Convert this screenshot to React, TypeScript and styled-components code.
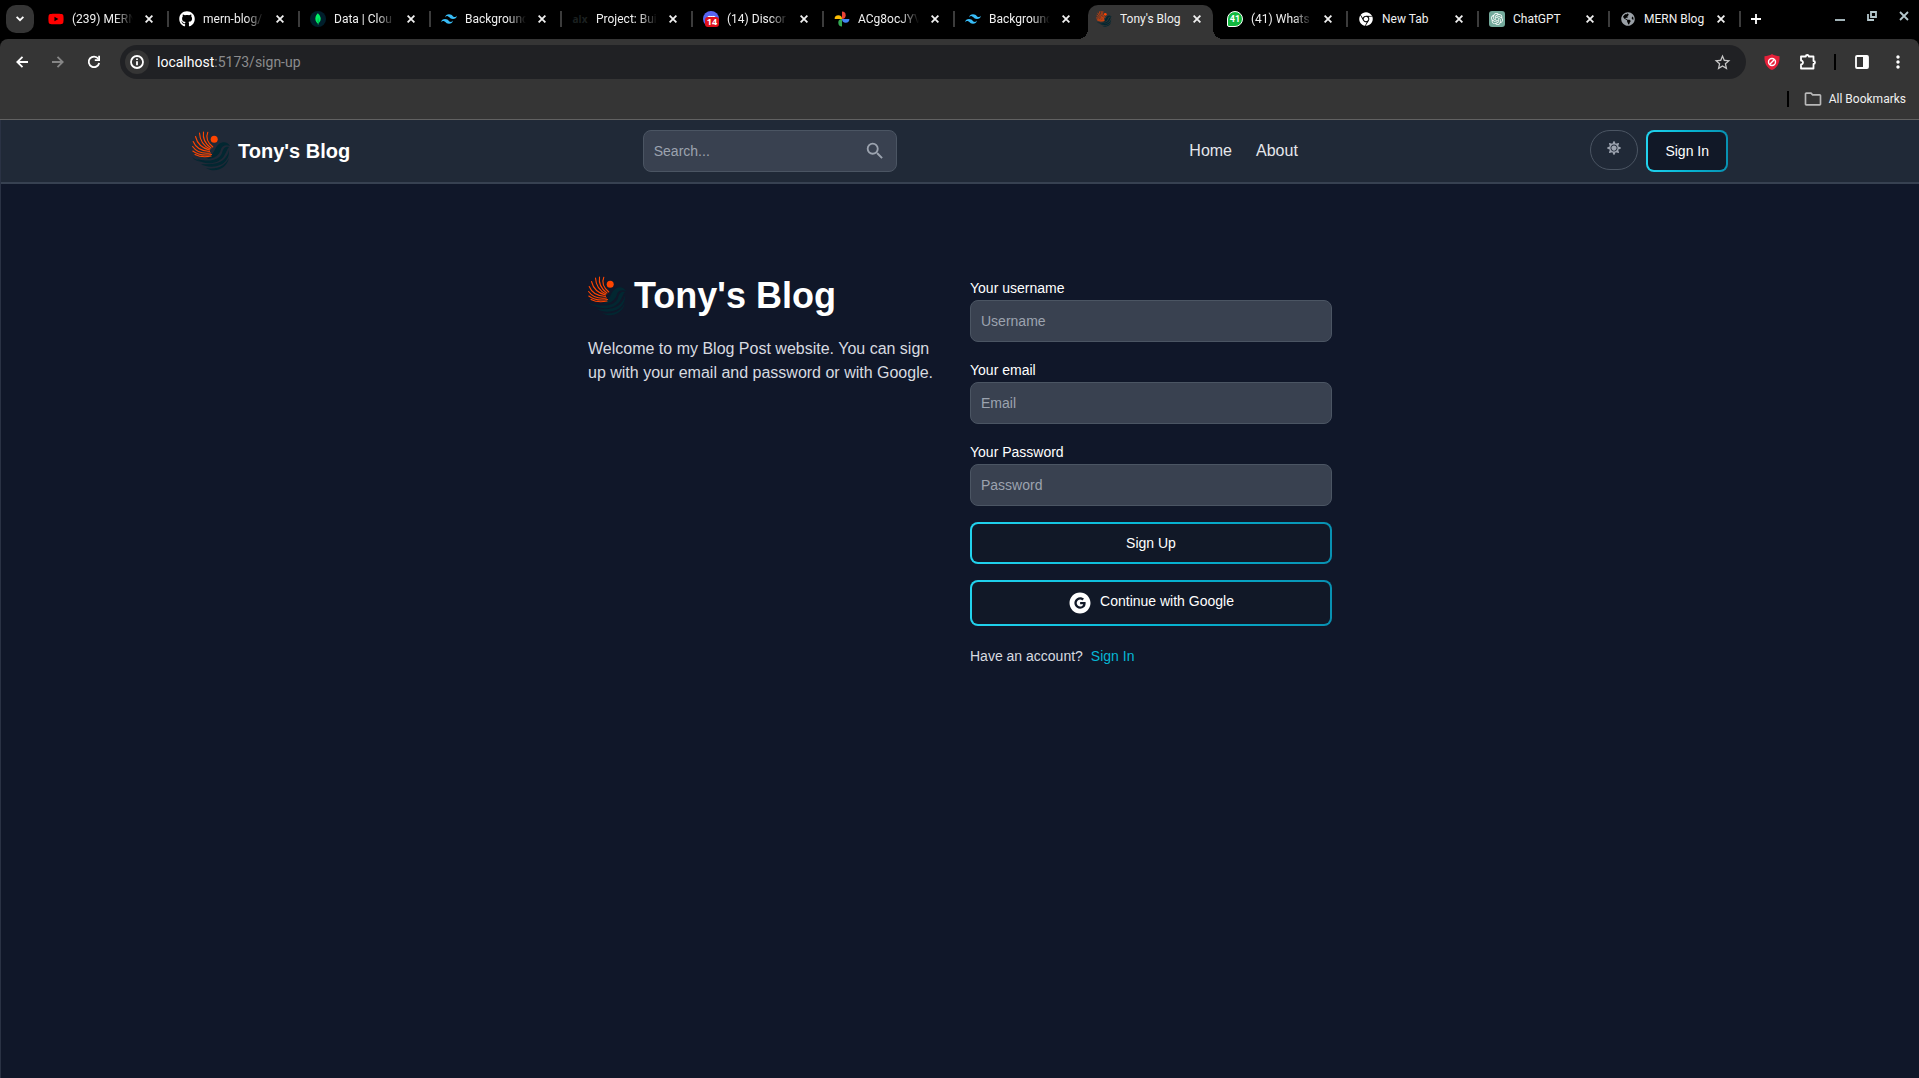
import React from "react";
import styled, { createGlobalStyle, css } from "styled-components";
import { FaYoutube, FaGithub, FaSun, FaChrome, FaGlobeAmericas, FaDiscord } from "react-icons/fa";
import { SiTailwindcss, SiMongodb, SiOpenai } from "react-icons/si";
import { AiFillGoogleCircle } from "react-icons/ai";
import { MdMoreVert, MdOutlineFolder, MdSearch, MdStarOutline } from "react-icons/md";

const GlobalStyle = createGlobalStyle`
  *, *::before, *::after { box-sizing: border-box; }
  body { margin: 0; background: #101729; }
  button, input { font: inherit; margin: 0; }
  button { padding: 0; border: 0; background: none; color: inherit; cursor: pointer; }
  svg { display: block; flex: none; }
  a { color: inherit; text-decoration: none; }
  h1, p { margin: 0; }
`;

const Page = styled.div`
  display: flex;
  flex-direction: column;
  min-height: 100vh;
  font-family: "Liberation Sans", Arial, sans-serif;
`;

/* ---------- browser chrome ---------- */

const Browser = styled.header`
  background: #000;
  color: #fff;
  font-family: Roboto, sans-serif;
  font-size: 12px;
  line-height: 16px;
`;

const TabStrip = styled.div`
  display: flex;
  align-items: flex-start;
  height: 39px;
  padding: 5px 10px 0 6px;
`;

const TabSearch = styled.button`
  display: grid;
  place-items: center;
  flex: none;
  width: 28px;
  height: 28px;
  margin-right: 6px;
  border-radius: 10px;
  background: #353535;
`;

const Tab = styled.div<{ $active?: boolean }>`
  position: relative;
  display: flex;
  align-items: center;
  gap: 8px;
  flex: 0 1 125px;
  min-width: 0;
  height: 34px;
  padding: 0 8px 6px;
  color: #f0f0f0;
  ${(p) =>
    p.$active &&
    css`
      background: #353535;
      border-radius: 10px 10px 0 0;
      &::before,
      &::after {
        content: "";
        position: absolute;
        bottom: 0;
        width: 10px;
        height: 10px;
      }
      &::before {
        right: 100%;
        background: radial-gradient(circle at 0 0, transparent 10px, #353535 10px);
      }
      &::after {
        left: 100%;
        background: radial-gradient(circle at 100% 0, transparent 10px, #353535 10px);
      }
    `}
`;

const TabTitle = styled.span<{ $fade?: boolean }>`
  flex: 1;
  min-width: 0;
  overflow: hidden;
  white-space: nowrap;
  ${(p) => p.$fade && css`mask-image: linear-gradient(to right, #000 70%, transparent);`}
`;

const TabDivider = styled.span<{ $hidden?: boolean }>`
  flex: none;
  width: 2px;
  height: 16px;
  margin: 6px 2px 0;
  background: ${(p) => (p.$hidden ? "transparent" : "#3c3c3c")};
`;

const TabClose = styled.button`
  display: grid;
  place-items: center;
  width: 16px;
  height: 16px;
`;

const NewTab = styled.button`
  display: grid;
  place-items: center;
  width: 26px;
  height: 28px;
`;

const WindowControls = styled.div`
  display: flex;
  gap: 22px;
  margin-left: auto;
  padding-top: 6px;
  color: #b4c7cc;
`;

const ControlButton = styled.button`
  width: 10px;
  height: 10px;
`;

const Toolbar = styled.div`
  display: flex;
  align-items: center;
  padding: 6px 9px 0 10px;
  background: #353535;
  border-radius: 8px 8px 0 0;
`;

const ToolButton = styled.button<{ $dim?: boolean }>`
  display: grid;
  place-items: center;
  flex: none;
  width: 24px;
  height: 24px;
  color: ${(p) => (p.$dim ? "#868686" : "#fff")};
`;

const NavTools = styled.div`
  display: flex;
  gap: 12px;
  margin-right: 14px;
`;

const AddressBar = styled.div`
  display: flex;
  align-items: center;
  flex: 1;
  height: 34px;
  padding: 0 12px 0 5px;
  border-radius: 17px;
  background: #202124;
  font-size: 14px;
`;

const SiteInfo = styled(ToolButton)`
  margin-right: 8px;
  border-radius: 50%;
  background: #353535;
`;

const Address = styled.span`
  flex: 1;
  color: #8b8c8e;
  b {
    color: #fff;
    font-weight: 400;
  }
`;

const EndTools = styled.div`
  display: flex;
  align-items: center;
  gap: 12px;
  margin-left: 14px;
`;

const BarDivider = styled.span`
  width: 2px;
  height: 16px;
  background: #000;
`;

const SideTools = styled.div`
  display: flex;
  align-items: center;
  gap: 14px;
  margin-left: 2px;
`;

const BookmarksBar = styled.div`
  display: flex;
  justify-content: flex-end;
  align-items: center;
  gap: 14px;
  height: 41px;
  padding: 0 13px 1px 0;
  background: #353535;
  border-bottom: 1px solid #616161;
`;

const Bookmark = styled.button`
  display: flex;
  align-items: center;
  gap: 6px;
  color: #f0f0f0;
`;

/* ---------- shared page parts ---------- */

const Outline = styled.button`
  padding: 2px;
  border-radius: 8px;
  background: linear-gradient(to right, #22d3ee, #06b6d4, #0891b2);
  color: #fff;
  font-size: 14px;
  line-height: 20px;
`;

const OutlineFace = styled.span`
  display: flex;
  justify-content: center;
  gap: 8px;
  padding: 9px 17px;
  border-radius: 6px;
  background: #111827;
`;

const Field = styled.div`
  display: flex;
  align-items: center;
  height: 42px;
  padding: 0 10px;
  border: 1px solid #4b5563;
  border-radius: 8px;
  background: #394150;
  color: #9ca3af;
`;

const TextInput = styled.input`
  flex: 1;
  width: 100%;
  min-width: 0;
  padding: 0;
  border: 0;
  outline: 0;
  background: none;
  color: #fff;
  font-size: 14px;
  line-height: 20px;
  &::placeholder {
    color: #9ca3af;
    opacity: 1;
  }
`;

const Brand = styled.a<{ $large?: boolean }>`
  display: flex;
  align-items: center;
  gap: 8px;
  color: #fff;
  font-weight: 700;
  font-size: ${(p) => (p.$large ? 36 : 20)}px;
  line-height: 40px;
`;

/* ---------- site header ---------- */

const Site = styled.div`
  flex: 1;
  border-left: 1px solid #2a3244;
`;

const SiteNav = styled.nav`
  padding: 10px 16px;
  background: #202937;
  border-bottom: 2px solid #374151;
`;

const NavInner = styled.div`
  display: flex;
  align-items: center;
  justify-content: space-between;
  max-width: 1536px;
  margin: 0 auto;
`;

const SearchForm = styled.form`
  width: 254px;
`;

const NavLinks = styled.div`
  display: flex;
  gap: 24px;
  color: #e5e7eb;
  font-size: 16px;
  line-height: 24px;
`;

const NavActions = styled.div`
  display: flex;
  align-items: flex-start;
  gap: 8px;
`;

const ThemeButton = styled.button`
  display: flex;
  justify-content: center;
  width: 48px;
  height: 40px;
  padding-top: 10px;
  border: 1px solid #4b5563;
  border-radius: 20px;
  color: #9ca3af;
`;

/* ---------- sign-up ---------- */

const Main = styled.main`
  display: grid;
  grid-template-columns: 1fr 1fr;
  gap: 20px;
  width: 100%;
  max-width: 768px;
  margin: 80px auto 0;
  padding: 12px;
`;

const Intro = styled.p`
  margin-top: 21px;
  color: #d8dbe0;
  font-size: 16px;
  line-height: 24px;
`;

const Form = styled.form`
  display: flex;
  flex-direction: column;
  gap: 16px;
`;

const FormRow = styled.div`
  font-size: 16px;
  line-height: 24px;
`;

const Label = styled.label`
  color: #fff;
  font-size: 14px;
`;

const Prompt = styled.p`
  display: flex;
  gap: 8px;
  margin-top: 20px;
  color: #d8dbe0;
  font-size: 14px;
  line-height: 20px;
  a {
    color: #06b6d4;
  }
`;

/* ---------- drawings ---------- */

const LineArt = styled.svg.attrs({ fill: "none", stroke: "currentColor", strokeWidth: 1.8 })``;

function Phoenix({ small }: { small?: boolean }) {
  return (
    <svg width={small ? 16 : 38} height={small ? 16 : 40} viewBox="0 0 38 40" aria-hidden="true">
      <g fill="#022731">
        <path d="M38 15C36 11 31 10 27 13C22 17 23 23 15 28C22 28 28 24 29 18C30 15 34 13 38 15Z" />
        <path d="M37 16C33 15 31 18 30 22C28 28 19 32 5 28C13 35 27 33 32 25C34 22 35 18 37 16Z" />
        <path d="M37 19C35 28 28 35 9 33C17 38 31 36 35 28C37 25 37 22 37 19Z" />
        <path d="M37 27C33 35 25 39 14 37C22 42 34 39 37 27Z" />
        <path d="M0 26C4 31 9 31 13 30C8 30 4 29 0 26Z" />
      </g>
      <g fill="none" stroke="#ff4500" strokeWidth={small ? 1.6 : 1.1} strokeLinecap="round">
        <path d="M3 23.500Q10 27 19 25" />
        <path d="M.8 20Q8 25.500 19.500 23.500" />
        <path d="M.6 15.500Q6 23.500 18.500 22" />
        <path d="M1.200 10.500Q5 20 17.500 20.500" />
        <path d="M3.500 5.500Q6 16 17.500 19" />
        <path d="M7.500 2Q8 13 18 18" />
        <path d="M11.500 1Q10 10.500 19 17" />
        <path d="M15.800 1.200Q12.500 9 20.800 16" />
      </g>
      <circle cx="22.200" cy="8.200" r="3.500" fill="#ff4500" />
    </svg>
  );
}

function PhotosIcon() {
  return (
    <svg width="16" height="16" viewBox="0 0 16 16" aria-hidden="true">
      <path d="M8 .6a3.700 3.700 0 0 1 0 7.400Z" fill="#ea4335" />
      <path d="M15.400 8a3.700 3.700 0 0 1-7.400 0Z" fill="#4285f4" />
      <path d="M8 15.400a3.700 3.700 0 0 1 0-7.400Z" fill="#34a853" />
      <path d="M.6 8a3.700 3.700 0 0 1 7.400 0Z" fill="#fbbc04" />
    </svg>
  );
}

const Favicon = styled.span<{ $bg?: string; $round?: boolean; $fg?: string }>`
  position: relative;
  display: grid;
  place-items: center;
  flex: none;
  width: 16px;
  height: 16px;
  border-radius: ${(p) => (p.$round ? "8px" : "3px")};
  background: ${(p) => p.$bg || "transparent"};
  color: ${(p) => p.$fg || "#fff"};
`;

const FaviconCount = styled.span`
  position: absolute;
  right: 0;
  bottom: 0;
  width: 14px;
  height: 10px;
  border-radius: 3px;
  background: #e0101b;
  font: 700 9px/10px "Open Sans", sans-serif;
  text-align: center;
`;

const ChatCount = styled.span`
  width: 16px;
  height: 16px;
  border: 1px solid #fff;
  border-radius: 8px 8px 8px 2px;
  background: #12b83f;
  font: 700 9px/14px Roboto, sans-serif;
  text-align: center;
`;

const AlxMark = styled.span`
  color: #1b2020;
  font: 700 10px/16px "Open Sans", sans-serif;
`;

const tailwind = (
  <Favicon $fg="#38bdf8">
    <SiTailwindcss size={16} />
  </Favicon>
);

const tabs: { title: string; icon: React.ReactNode; fade?: boolean; active?: boolean }[] = [
  {
    title: "(239) MERN",
    fade: true,
    icon: (
      <Favicon $fg="#f00">
        <FaYoutube size={16} />
      </Favicon>
    ),
  },
  {
    title: "mern-blog/",
    fade: true,
    icon: (
      <Favicon>
        <FaGithub size={16} />
      </Favicon>
    ),
  },
  {
    title: "Data | Clou",
    fade: true,
    icon: (
      <Favicon $bg="#001e2b" $round $fg="#00ed64">
        <SiMongodb size={12} />
      </Favicon>
    ),
  },
  { title: "Background", fade: true, icon: tailwind },
  {
    title: "Project: Bui",
    fade: true,
    icon: (
      <Favicon>
        <AlxMark>alx</AlxMark>
      </Favicon>
    ),
  },
  {
    title: "(14) Discor",
    fade: true,
    icon: (
      <Favicon $bg="#5865f2" $round>
        <FaDiscord size={11} />
        <FaviconCount>14</FaviconCount>
      </Favicon>
    ),
  },
  { title: "ACg8ocJYV", fade: true, icon: <PhotosIcon /> },
  { title: "Background", fade: true, icon: tailwind },
  { title: "Tony's Blog", active: true, icon: <Phoenix small /> },
  {
    title: "(41) Whats",
    fade: true,
    icon: (
      <Favicon>
        <ChatCount>41</ChatCount>
      </Favicon>
    ),
  },
  {
    title: "New Tab",
    icon: (
      <Favicon>
        <FaChrome size={14} />
      </Favicon>
    ),
  },
  {
    title: "ChatGPT",
    icon: (
      <Favicon $bg="#74aa9c">
        <SiOpenai size={12} />
      </Favicon>
    ),
  },
  {
    title: "MERN Blog",
    icon: (
      <Favicon $fg="#9aa0a6">
        <FaGlobeAmericas size={14} />
      </Favicon>
    ),
  },
];

function BrowserChrome() {
  return (
    <Browser>
      <TabStrip>
        <TabSearch aria-label="Search tabs">
          <LineArt width="8" height="6" viewBox="0 0 8 6">
            <path d="M.6 .8L4 4.200L7.400 .8" />
          </LineArt>
        </TabSearch>
        {tabs.map((tab, i) => (
          <React.Fragment key={i}>
            <Tab $active={tab.active}>
              {tab.icon}
              <TabTitle $fade={tab.fade}>{tab.title}</TabTitle>
              <TabClose aria-label="Close tab">
                <LineArt width="8" height="8" viewBox="0 0 8 8">
                  <path d="M.6 .6l6.800 6.800M7.400 .6L.6 7.400" />
                </LineArt>
              </TabClose>
            </Tab>
            <TabDivider $hidden={tab.active || tabs[i + 1]?.active} />
          </React.Fragment>
        ))}
        <NewTab aria-label="New tab">
          <LineArt width="10" height="10" viewBox="0 0 10 10">
            <path d="M5 0v10M0 5h10" />
          </LineArt>
        </NewTab>
        <WindowControls>
          <ControlButton aria-label="Minimise">
            <LineArt width="10" height="10" viewBox="0 0 10 10">
              <path d="M0 9h10" />
            </LineArt>
          </ControlButton>
          <ControlButton aria-label="Restore">
            <LineArt width="10" height="10" viewBox="0 0 10 10">
              <path d="M4 1h5v5H4zM1 3v6h6" />
            </LineArt>
          </ControlButton>
          <ControlButton aria-label="Close window">
            <LineArt width="10" height="10" viewBox="0 0 10 10">
              <path d="M1 1l8 8M9 1l-8 8" />
            </LineArt>
          </ControlButton>
        </WindowControls>
      </TabStrip>
      <Toolbar>
        <NavTools>
          <ToolButton aria-label="Back">
            <LineArt width="12" height="12" viewBox="0 0 12 12">
              <path d="M12 6H1.500M6.500 .8L1.300 6l5.200 5.200" />
            </LineArt>
          </ToolButton>
          <ToolButton aria-label="Forward" $dim>
            <LineArt width="12" height="12" viewBox="0 0 12 12">
              <path d="M0 6h10.500M5.500 .8L10.700 6l-5.200 5.200" />
            </LineArt>
          </ToolButton>
          <ToolButton aria-label="Reload">
            <LineArt width="14" height="14" viewBox="0 0 14 14">
              <path d="M11.300 3.700A5.300 5.300 0 1 0 12.200 8" />
              <path d="M12.100 .8v4.300H7.800" />
            </LineArt>
          </ToolButton>
        </NavTools>
        <AddressBar>
          <SiteInfo aria-label="Site information">
            <LineArt width="14" height="14" viewBox="0 0 14 14">
              <circle cx="7" cy="7" r="6" />
              <path d="M7 6.200v4M7 3.400v1.700" />
            </LineArt>
          </SiteInfo>
          <Address>
            <b>localhost</b>:5173/sign-up
          </Address>
          <ToolButton aria-label="Bookmark this page">
            <MdStarOutline size={19} color="#c7c7c7" />
          </ToolButton>
        </AddressBar>
        <EndTools>
          <ToolButton aria-label="Ad blocker">
            <svg width="16" height="16" viewBox="0 0 16 16" fill="none">
              <path d="M8 0C10 1.600 13 2 15.500 2.200C16 9 13 14 8 16C3 14 0 9 .5 2.200C3 2 6 1.600 8 0Z" fill="#e6213a" />
              <circle cx="8" cy="8" r="3.500" stroke="#fff" strokeWidth="1.400" />
              <path d="M5.600 10.400l4.800-4.800" stroke="#fff" strokeWidth="1.400" />
            </svg>
          </ToolButton>
          <ToolButton aria-label="Extensions">
            <LineArt width="18" height="18" viewBox="0 0 18 18" strokeLinejoin="round">
              <path d="M2 3.500H6.800a1.500 1.500 0 0 1 3 0H14.500V8a1.500 1.500 0 0 1 0 3V15.500H2v-4a2 2 0 0 0 0-4Z" />
            </LineArt>
          </ToolButton>
          <SideTools>
            <BarDivider />
            <ToolButton aria-label="Side panel">
              <LineArt width="14" height="14" viewBox="0 0 14 14">
                <rect x="1" y="1" width="12" height="12" rx="1" />
                <path d="M8 1h5v12H8z" fill="currentColor" stroke="none" />
              </LineArt>
            </ToolButton>
          </SideTools>
          <ToolButton aria-label="Menu">
            <MdMoreVert size={20} />
          </ToolButton>
        </EndTools>
      </Toolbar>
      <BookmarksBar>
        <BarDivider />
        <Bookmark>
          <MdOutlineFolder size={20} color="#b8b8b8" />
          All Bookmarks
        </Bookmark>
      </BookmarksBar>
    </Browser>
  );
}

const fields = [
  { id: "username", label: "Your username", placeholder: "Username", type: "text" },
  { id: "email", label: "Your email", placeholder: "Email", type: "email" },
  { id: "password", label: "Your Password", placeholder: "Password", type: "password" },
];

export default function App() {
  return (
    <Page>
      <GlobalStyle />
      <BrowserChrome />
      <Site>
        <SiteNav>
          <NavInner>
            <Brand href="#home">
              <Phoenix />
              Tony's Blog
            </Brand>
            <SearchForm>
              <Field>
                <TextInput type="text" placeholder="Search..." aria-label="Search" />
                <MdSearch size={22} />
              </Field>
            </SearchForm>
            <NavLinks>
              <a href="#home">Home</a>
              <a href="#about">About</a>
            </NavLinks>
            <NavActions>
              <ThemeButton aria-label="Toggle theme">
                <FaSun size={14} />
              </ThemeButton>
              <Outline type="button">
                <OutlineFace>Sign In</OutlineFace>
              </Outline>
            </NavActions>
          </NavInner>
        </SiteNav>
        <Main>
          <section>
            <Brand href="#home" $large>
              <Phoenix />
              Tony's Blog
            </Brand>
            <Intro>
              Welcome to my Blog Post website. You can sign up with your email and password or with Google.
            </Intro>
          </section>
          <section>
            <Form>
              {fields.map((f) => (
                <FormRow key={f.id}>
                  <Label htmlFor={f.id}>{f.label}</Label>
                  <Field>
                    <TextInput id={f.id} type={f.type} placeholder={f.placeholder} />
                  </Field>
                </FormRow>
              ))}
              <Outline type="submit">
                <OutlineFace>Sign Up</OutlineFace>
              </Outline>
              <Outline type="button">
                <OutlineFace>
                  <AiFillGoogleCircle size={24} />
                  Continue with Google
                </OutlineFace>
              </Outline>
            </Form>
            <Prompt>
              Have an account? <a href="#sign-in">Sign In</a>
            </Prompt>
          </section>
        </Main>
      </Site>
    </Page>
  );
}
